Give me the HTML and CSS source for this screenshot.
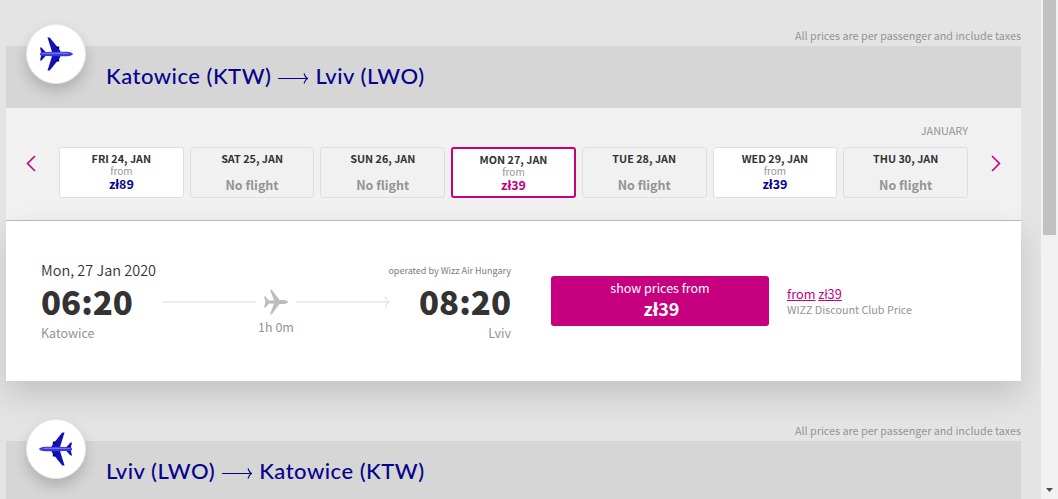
FILE: index.html
```
<!DOCTYPE html>
<html lang="en">
<head>
  <meta charset="UTF-8">
  <title>Select flight</title>
  <meta name="viewport" content="width=device-width, initial-scale=1">
  <link rel="stylesheet" href="styles.css">
</head>
<body>

<svg width="0" height="0" class="sprite">
  <symbol id="plane" viewBox="0 0 34 34">
    <path class="tail" d="M1 10.500h1.500l4.500 5v3l-4.500 5H1l1.500-6.500z"/>
    <path class="wing" d="M8.500.5h2.200L16 7l5 6.500 1 3H13.500z"/>
    <path class="wing" d="M8.500 33.500h2.200L16 27l5-6.500 1-3H13.500z"/>
    <path class="engine" d="M17 9.500h3.200v2.500H18.500zM17 24.500h3.200V22H18.500z"/>
    <path class="hull" d="M1 17c0-1 .5-1.700 2-1.800L14 14.700h14c3 .2 5.500 1 6 2.300-.5 1.300-3 2.100-6 2.300H14L3 18.800c-1.500-.1-2-.8-2-1.800z"/>
    <path class="shine" d="M1.500 16.200L14 15.800h13l4 .6-4 .5H3z"/>
  </symbol>
  <symbol id="arrow" viewBox="0 0 30 12">
    <path d="M0 6.500h29M26 1.500q1 3.500 3.500 5-2.500 1.500-3.500 5" fill="none" stroke="currentColor" stroke-width="1.100"/>
  </symbol>
</svg>

<div class="page">
  <main class="content">

    <section class="flight">
      <p class="note">All prices are per passenger and include taxes</p>
      <header class="route">
        <div class="badge"><svg class="plane"><use href="#plane"/></svg></div>
        <h2><span class="city">Katowice (KTW)</span><svg class="arrow"><use href="#arrow"/></svg><span class="city">Lviv (LWO)</span></h2>
      </header>

      <div class="calendar">
        <button class="nav prev"><svg viewBox="0 0 10 17"><path d="M9 1L1.500 8.500 9 16"/></svg></button>
        <div class="days-wrap">
          <div class="month">JANUARY</div>
          <div class="days">
            <div class="day available"><b>FRI 24, JAN</b><small>from</small><strong>zł89</strong></div>
            <div class="day"><b>SAT 25, JAN</b><em>No flight</em></div>
            <div class="day"><b>SUN 26, JAN</b><em>No flight</em></div>
            <div class="day available selected"><b>MON 27, JAN</b><small>from</small><strong>zł39</strong></div>
            <div class="day"><b>TUE 28, JAN</b><em>No flight</em></div>
            <div class="day available"><b>WED 29, JAN</b><small>from</small><strong>zł39</strong></div>
            <div class="day"><b>THU 30, JAN</b><em>No flight</em></div>
          </div>
        </div>
        <button class="nav next"><svg viewBox="0 0 10 17"><path d="M1 1l7.500 7.500L1 16"/></svg></button>
      </div>

      <div class="details">
        <div class="trip">
          <div class="stop">
            <div class="date">Mon, 27 Jan 2020</div>
            <div class="time">06:20</div>
            <div class="place">Katowice</div>
          </div>
          <div class="path">
            <div class="line-row">
              <span class="line"></span>
              <svg class="plane-grey" viewBox="0 0 24 26"><path d="M0 7.500h1.500L5 11.600l5-.4L6 .8h1.800L15.500 11H20c2.300.2 3.600 1 4 2-.4 1-1.700 1.800-4 2h-4.500L7.800 25.200H6L10 14.800l-5-.4-3.500 4.100H0L1.400 13z"/></svg>
              <span class="line"><svg viewBox="0 0 6 12"><path d="M1 .5q1 4 4 5.500-3 1.500-4 5.500"/></svg></span>
            </div>
            <div class="duration">1h 0m</div>
          </div>
          <div class="stop arrival">
            <div class="operator">operated by Wizz Air Hungary</div>
            <div class="time">08:20</div>
            <div class="place">Lviv</div>
          </div>
        </div>
        <button class="show-prices"><span>show prices from</span><strong>zł39</strong></button>
        <div class="club">
          <div class="club-price"><a href="#">from</a> <a href="#">zł39</a></div>
          <div class="club-label">WIZZ Discount Club Price</div>
        </div>
      </div>
    </section>

    <section class="flight">
      <p class="note">All prices are per passenger and include taxes</p>
      <header class="route">
        <div class="badge"><svg class="plane return"><use href="#plane"/></svg></div>
        <h2><span class="city">Lviv (LWO)</span><svg class="arrow"><use href="#arrow"/></svg><span class="city">Katowice (KTW)</span></h2>
      </header>
    </section>

  </main>

  <div class="scrollbar">
    <div class="thumb"></div>
    <svg viewBox="0 0 8 4"><path d="M0 0h7L3.500 4z"/></svg>
  </div>
</div>

</body>
</html>
```
FILE: styles.css
```
:root {
  --pink: #c6007e;
  --navy: #06038d;
  --text: #333;
  --grey: #949494;
}

* {
  box-sizing: border-box;
}

body {
  margin: 0;
  overflow: hidden;
  background: #e4e4e4;
  color: var(--text);
  font-family: "Noto Sans CJK SC", "Open Sans", sans-serif;
}

button {
  padding: 0;
  border: none;
  background: none;
  font-family: inherit;
  cursor: pointer;
}

.sprite {
  position: absolute;
}

.page {
  display: flex;
  height: 499px;
  overflow: hidden;
}

.content {
  flex: 1;
  overflow: hidden;
  padding: 26px 20px 0 6px;
}

.flight {
  margin-bottom: 40px;
}

.note {
  margin: 0;
  height: 20px;
  line-height: 20px;
  text-align: right;
  font-size: 10.750px;
  color: var(--grey);
}

/* route header */
.route {
  position: relative;
  display: flex;
  align-items: center;
  height: 62px;
  padding-left: 100px;
  background: #d6d6d6;
}

.badge {
  position: absolute;
  left: 20px;
  top: -22px;
  width: 60px;
  height: 60px;
  display: flex;
  align-items: center;
  justify-content: center;
  border: 1px solid #e8e8e8;
  border-radius: 50%;
  background: #fff;
  box-shadow: 0 7px 14px rgba(0, 0, 0, 0.18);
}

.plane {
  width: 34px;
  height: 34px;
}

.plane.return {
  transform: scaleX(-1);
}

.wing, .tail {
  fill: #1210b4;
}

.engine {
  fill: #080466;
}

.hull {
  fill: #3c38e0;
}

.shine {
  fill: #7773f2;
}

.route h2 {
  display: flex;
  align-items: center;
  margin: 0 0 2px;
  font-family: Lato, sans-serif;
  font-size: 22px;
  font-weight: 500;
  line-height: 30px;
  letter-spacing: 0.5px;
  color: var(--navy);
  white-space: nowrap;
}

.arrow {
  width: 30px;
  height: 12px;
  margin: 4px 7px 0;
}

/* date strip */
.calendar {
  display: flex;
  height: 113px;
  background: #f1f1f1;
  border-bottom: 1px solid #bdbdbd;
}

.nav {
  width: 53px;
  display: flex;
  justify-content: center;
  padding-top: 47px;
}

.prev {
  padding-right: 4px;
}

.next {
  padding-left: 2px;
}

.nav svg {
  width: 10px;
  height: 17px;
  fill: none;
  stroke: var(--pink);
  stroke-width: 1.600;
}

.days-wrap {
  flex: 1;
  padding-top: 13px;
}

.month {
  height: 26px;
  line-height: 18px;
  text-align: right;
  font-size: 10.900px;
  color: var(--grey);
}

.days {
  display: grid;
  grid-template-columns: repeat(7, 1fr);
  gap: 6px;
}

.day {
  height: 51px;
  display: flex;
  flex-direction: column;
  align-items: center;
  padding-top: 3px;
  border: 1px solid #dfdfdf;
  border-radius: 3px;
  white-space: nowrap;
}

.day.available {
  background: #fff;
}

.day.selected {
  border: 2px solid var(--pink);
}

.day b {
  font-size: 10.800px;
  line-height: 14px;
}

.day small {
  font-size: 10px;
  line-height: 11px;
  color: var(--grey);
}

.day strong {
  margin-top: 1px;
  font-size: 12.500px;
  line-height: 14px;
  color: var(--navy);
}

.day em {
  margin-top: 12px;
  font-size: 12.500px;
  line-height: 16px;
  font-style: normal;
  font-weight: bold;
  color: var(--grey);
}

.day.selected strong {
  color: var(--pink);
}

/* selected flight */
.details {
  display: flex;
  height: 160px;
  padding: 0 0 0 35px;
  background: #fff;
  box-shadow: 0 14px 30px rgba(0, 0, 0, 0.15);
  white-space: nowrap;
}

.trip {
  display: flex;
  width: 470px;
  padding-top: 40px;
}

.stop {
  width: 121px;
}

.date, .operator {
  height: 20px;
  line-height: 18px;
}

.date {
  font-size: 14.500px;
  font-weight: 350;
}

.operator {
  font-size: 9px;
  line-height: 20px;
  color: #7d7d7d;
}

.time {
  height: 43px;
  line-height: 40px;
  font-size: 33px;
  font-weight: 900;
}

.place, .duration {
  font-size: 12.500px;
  line-height: 18px;
  color: var(--grey);
}

.arrival {
  display: flex;
  flex-direction: column;
  align-items: flex-end;
}

.path {
  width: 228px;
  padding-top: 28px;
  text-align: center;
}

.line-row {
  display: flex;
  align-items: center;
  height: 26px;
}

.line {
  width: 94px;
  height: 2px;
  background: #ededed;
  display: flex;
  align-items: center;
  justify-content: flex-end;
}

.line svg {
  flex-shrink: 0;
  width: 6px;
  height: 12px;
  fill: none;
  stroke: #dcdcdc;
}

.plane-grey {
  width: 24px;
  height: 26px;
  margin: 0 8px;
  fill: #bdbdbd;
}

.duration {
  margin-top: 3px;
}

.show-prices {
  width: 218px;
  height: 50px;
  margin: 55px 18px 0 40px;
  padding-bottom: 4px;
  display: flex;
  flex-direction: column;
  align-items: center;
  justify-content: center;
  border-radius: 3px;
  background: var(--pink);
  color: #fff;
}

.show-prices span {
  font-size: 12.500px;
  line-height: 18px;
}

.show-prices strong {
  padding-left: 3px;
  font-size: 18px;
  line-height: 22px;
}

.club {
  padding-top: 64px;
}

.club-price {
  font-size: 12.750px;
  line-height: 17px;
}

.club-price a {
  color: var(--pink);
}

.club-label {
  font-size: 10.750px;
  line-height: 16px;
  color: var(--grey);
}

/* scrollbar */
.scrollbar {
  width: 17px;
  display: flex;
  flex-direction: column;
  align-items: center;
  justify-content: space-between;
  padding-bottom: 7px;
  background: #f1f1f1;
}

.thumb {
  width: 13px;
  height: 235px;
  background: #c1c1c1;
}

.scrollbar svg {
  width: 8px;
  height: 4px;
  fill: #505050;
}
```
